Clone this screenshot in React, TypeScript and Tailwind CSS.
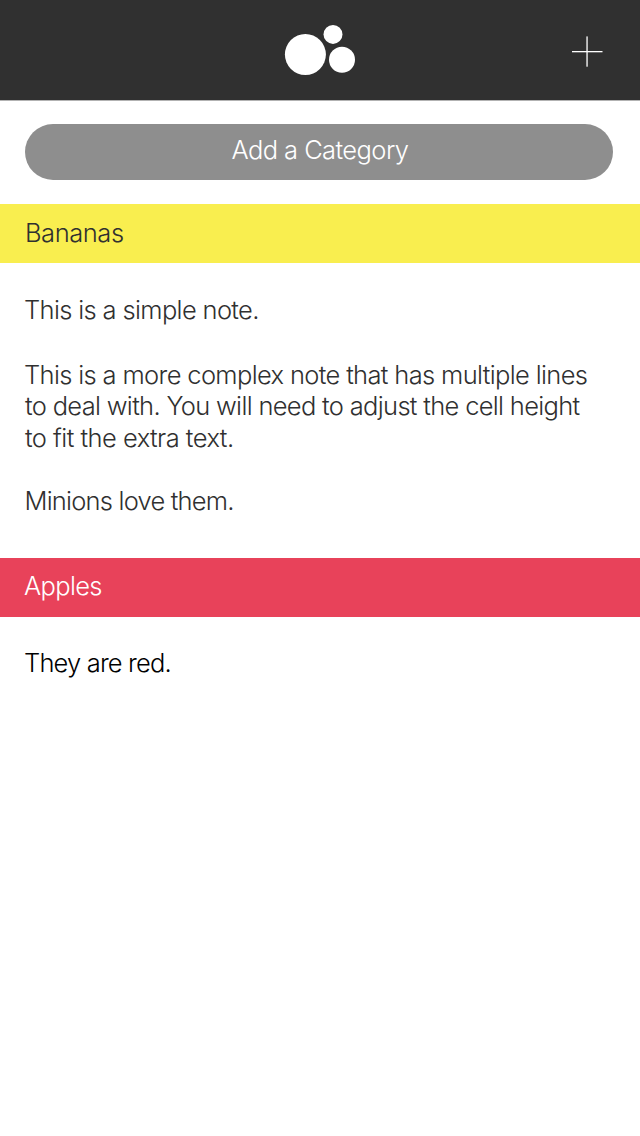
type Line = { text: string; style: string };
type Category = {
  name: string;
  bar: string;
  body: string;
  notes: { spacing: string; lines: Line[] }[];
};

const categories: Category[] = [
  {
    name: "Bananas",
    bar: "bg-[#f9ee4f] text-[#303030] pt-[13px] pl-[25px] tracking-[-0.45px]",
    body: "text-[#303030] pt-[31px] pb-[42px]",
    notes: [
      {
        spacing: "",
        lines: [{ text: "This is a simple note.", style: "tracking-[-0.65px]" }],
      },
      {
        spacing: "mt-[34px] leading-[31.3px]",
        lines: [
          { text: "This is a more complex note that has multiple lines", style: "tracking-[-0.65px]" },
          { text: "to deal with. You will need to adjust the cell height", style: "pl-px tracking-[-0.68px]" },
          { text: "to fit the extra text.", style: "pl-px tracking-[-0.53px]" },
        ],
      },
      {
        spacing: "mt-[32.1px]",
        lines: [{ text: "Minions love them.", style: "pl-[0.5px] tracking-[-0.79px]" }],
      },
    ],
  },
  {
    name: "Apples",
    bar: "bg-[#e8425a] text-white pt-3 pl-6 tracking-[-0.65px]",
    body: "text-black pt-[30px]",
    notes: [
      {
        spacing: "",
        lines: [{ text: "They are red.", style: "tracking-[-0.83px]" }],
      },
    ],
  },
];

function Logo() {
  return (
    <svg width="70" height="50" viewBox="285 25 70 50" fill="white" className="block overflow-visible">
      <circle cx="305.4" cy="54.5" r="20.5" />
      <circle cx="333" cy="34.4" r="9.5" />
      <circle cx="342" cy="59.8" r="13" />
    </svg>
  );
}

function PlusIcon() {
  return (
    <svg width="31" height="31" viewBox="0 0 31 31" fill="white" className="block">
      <rect x="0" y="15" width="30.5" height="1.3" />
      <rect x="14.4" y="0.4" width="1.3" height="30.3" />
    </svg>
  );
}

export default function App() {
  return (
    <div className="min-h-[1136px] w-[640px] overflow-hidden bg-white font-['Inter','Liberation_Sans',sans-serif] text-[25.5px] leading-[31px] font-light">
      <header className="grid h-[101px] grid-cols-3 items-center border-b border-[#b2b2b2] bg-[#303030]">
        <span />
        <div className="flex justify-center">
          <Logo />
        </div>
        <button aria-label="Add note" className="mt-0.5 mr-[37px] justify-self-end">
          <PlusIcon />
        </button>
      </header>
      <main>
        <div className="pt-[23px] pr-[27px] pb-6 pl-[25px]">
          <button className="flex h-14 w-full justify-center rounded-full bg-[#8e8e8e] pt-[10px] pl-[2px] tracking-[-0.58px] text-white">
            Add a Category
          </button>
        </div>
        {categories.map((category) => (
          <section key={category.name}>
            <h2 className={`h-[59px] ${category.bar}`}>{category.name}</h2>
            <div className={`pl-6 ${category.body}`}>
              {category.notes.map((note) => (
                <p key={note.lines[0].text} className={note.spacing}>
                  {note.lines.map((line) => (
                    <span key={line.text} className={`block whitespace-nowrap ${line.style}`}>
                      {line.text}{" "}
                    </span>
                  ))}
                </p>
              ))}
            </div>
          </section>
        ))}
      </main>
    </div>
  );
}
